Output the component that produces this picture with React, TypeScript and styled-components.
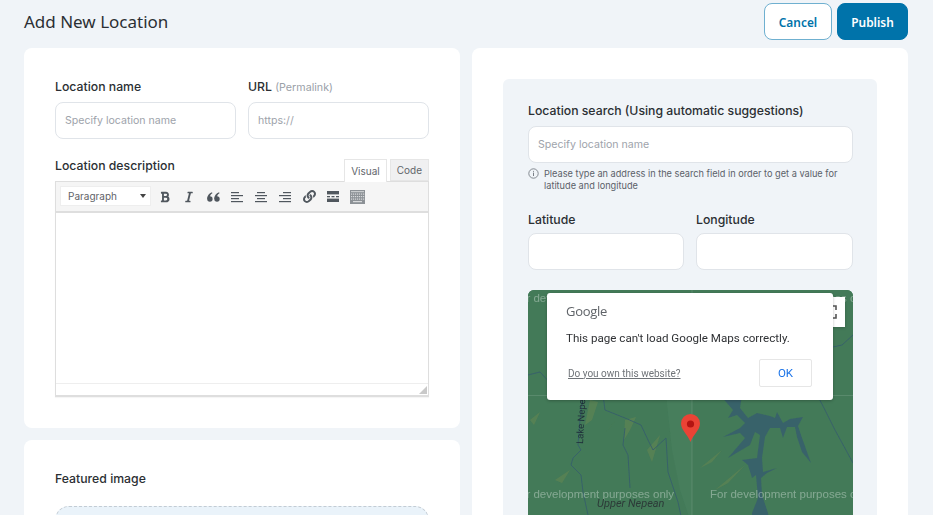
import React, { ReactElement } from 'react';
import styled, { createGlobalStyle } from 'styled-components';
import { FaBold, FaItalic, FaLink } from 'react-icons/fa';

const GlobalStyle = createGlobalStyle`
  html, body {
    margin: 0;
    padding: 0;
    background: #f0f4f8;
    font-family: Inter, "Liberation Sans", sans-serif;
    color: #24292f;
  }
  * {
    box-sizing: border-box;
  }
`;

const Page = styled.div`
  width: 933px;
  height: 515px;
  overflow: hidden;
  padding: 3px 25px 0 24px;
`;

const Header = styled.header`
  display: flex;
  justify-content: space-between;
  align-items: center;
  height: 37px;
  margin-bottom: 8px;
`;

const Title = styled.h1`
  margin: 0;
  font-family: "Noto Sans", sans-serif;
  font-size: 17px;
  font-weight: 400;
  color: #2b2f33;
`;

const Actions = styled.div`
  display: flex;
  gap: 5px;
`;

const Button = styled.button<{ $primary?: boolean }>`
  height: 37px;
  width: ${(p) => (p.$primary ? '71px' : '68px')};
  border-radius: 8px;
  border: 1px solid ${(p) => (p.$primary ? '#0073aa' : '#6fb0d0')};
  background: ${(p) => (p.$primary ? '#0073aa' : '#fff')};
  color: ${(p) => (p.$primary ? '#fff' : '#0073aa')};
  font-family: "Noto Sans", sans-serif;
  font-size: 11.9px;
  font-weight: 600;
  padding: 0;
`;

const Columns = styled.div`
  display: grid;
  grid-template-columns: 436px 436px;
  gap: 12px;
  align-items: start;
`;

const Column = styled.div`
  display: flex;
  flex-direction: column;
  gap: 12px;
`;

const Card = styled.section<{ $height?: number }>`
  background: #fff;
  border-radius: 8px;
  padding: 31px;
  height: ${(p) => (p.$height ? `${p.$height}px` : 'auto')};
`;

const Row = styled.div`
  display: grid;
  grid-template-columns: 1fr 1fr;
  gap: 12px;
`;

const Field = styled.div`
  display: flex;
  flex-direction: column;
  min-width: 0;
`;

const Label = styled.label`
  display: block;
  height: 16px;
  font-size: 12.25px;
  line-height: 16px;
  font-weight: 500;
  color: #2b2f33;
  margin-bottom: 7px;
`;

const Muted = styled.span`
  font-size: 10.7px;
  line-height: 1;
  font-weight: 400;
  color: #9aa0a8;
`;

const Input = styled.input`
  display: block;
  width: 100%;
  height: 37px;
  border: 1px solid #e0e4e9;
  border-radius: 8px;
  background: #fff;
  padding: 0 9px;
  font-family: inherit;
  font-size: 10.6px;
  outline: none;
  &::placeholder {
    color: #9ea3ab;
    opacity: 1;
  }
`;

const EditorHead = styled.div`
  display: flex;
  justify-content: space-between;
  align-items: flex-start;
  height: 22px;
  margin-top: 20px;
`;

const EditorLabel = styled(Label)`
  margin: -1px 0 0;
`;

const Tabs = styled.div`
  display: flex;
  gap: 3px;
`;

const Tab = styled.div<{ $active?: boolean }>`
  height: ${(p) => (p.$active ? '23px' : '22px')};
  padding: 0 6px;
  display: flex;
  align-items: center;
  font-size: 10px;
  color: #62666b;
  background: ${(p) => (p.$active ? '#fff' : '#f0f0f1')};
  border: 1px solid #e6e6e6;
  border-bottom: ${(p) => (p.$active ? '0' : '1px solid #e6e6e6')};
  position: relative;
  z-index: 1;
`;

const Editor = styled.div`
  height: 216px;
  border: 1px solid #dedede;
  border-bottom-width: 2px;
  display: flex;
  flex-direction: column;
  box-shadow: 0 1px 1px rgba(0, 0, 0, 0.04);
`;

const Toolbar = styled.div`
  height: 31px;
  flex: none;
  display: flex;
  align-items: center;
  padding-left: 4px;
  background: #f5f5f5;
  border-bottom: 2px solid #dedede;
`;

const FormatSelect = styled.div`
  width: 91px;
  height: 20px;
  margin-right: 2px;
  margin-bottom: 1px;
  background: #fff;
  border: 1px solid #eeeeee;
  display: flex;
  align-items: center;
  justify-content: space-between;
  padding: 0 4px 0 7px;
  font-size: 10px;
  color: #5f6368;
  &::after {
    content: '';
    border-left: 3px solid transparent;
    border-right: 3px solid transparent;
    border-top: 4px solid #444;
  }
`;

const ToolButton = styled.div`
  width: 24px;
  height: 24px;
  display: flex;
  align-items: center;
  justify-content: center;
  color: #50575e;
`;

const EditArea = styled.div`
  flex: 1;
  background: #fff;
`;

const StatusBar = styled.div`
  height: 12px;
  flex: none;
  background: #fff;
  border-top: 1px solid #eeeeee;
  display: flex;
  justify-content: flex-end;
  align-items: flex-end;
  padding: 0 1px 1px 0;
`;

const FeaturedLabel = styled(Label)`
  margin-bottom: 19px;
`;

const Dropzone = styled.div`
  height: 120px;
  border: 1px dashed #c3ccd4;
  border-radius: 14px;
  background: #eaf3fa;
`;

const SearchPanel = styled.div`
  background: #f0f4f8;
  border-radius: 6px;
  padding: 24px 24px 24px 25px;
`;

const Hint = styled.div`
  display: flex;
  gap: 5px;
  margin: 5px 0 20px;
  font-size: 9.2px;
  line-height: 12px;
  color: #5b6169;
`;

const HintIcon = styled.svg`
  flex: none;
  width: 11px;
  height: 11px;
`;

const LatLngRow = styled(Row)`
  grid-template-columns: 156px 157px;
  margin-bottom: 20px;
  ${Label} {
    margin-bottom: 5px;
  }
`;

const MapBox = styled.div`
  position: relative;
  height: 300px;
  border-radius: 6px;
  overflow: hidden;
  background: #437a58;
`;

const MapDrawing = styled.svg`
  display: block;
  width: 325px;
  height: 300px;
`;

const FullscreenControl = styled.div`
  position: absolute;
  top: 7px;
  right: 8px;
  width: 30px;
  height: 30px;
  background: #fff;
  display: flex;
  align-items: center;
  justify-content: center;
  box-shadow: 0 1px 3px rgba(0, 0, 0, 0.2);
`;

const Dialog = styled.div`
  position: absolute;
  top: 3px;
  left: 19px;
  width: 286px;
  height: 107px;
  background: #fff;
  border-radius: 3px;
  box-shadow: 0 1px 3px rgba(0, 0, 0, 0.25);
  padding: 10px 21px 13px 19px;
  display: flex;
  flex-direction: column;
`;

const GoogleMark = styled.div`
  font-family: "Open Sans", sans-serif;
  font-size: 13px;
  line-height: 17px;
  letter-spacing: -0.3px;
  color: #5f6368;
`;

const DialogText = styled.div`
  margin-top: 10px;
  font-family: Roboto, sans-serif;
  font-size: 11.6px;
  line-height: 16px;
  color: #2f3134;
`;

const DialogFoot = styled.div`
  margin-top: auto;
  display: flex;
  justify-content: space-between;
  align-items: center;
`;

const OwnLink = styled.a`
  margin-left: 2px;
  font-family: Roboto, sans-serif;
  font-size: 10px;
  color: #6f7378;
  text-decoration: underline;
`;

const OkButton = styled.button`
  width: 53px;
  height: 28px;
  padding: 0;
  background: #fff;
  border: 1px solid #e6e6e6;
  border-radius: 2px;
  color: #1a73e8;
  font-family: Roboto, sans-serif;
  font-size: 11.5px;
`;

const QuoteIcon = (): ReactElement => (
  <svg width="13" height="10" viewBox="0 0 13 10">
    <circle cx="2.9" cy="7" r="2.7" fill="#50575e" />
    <circle cx="10" cy="7" r="2.7" fill="#50575e" />
    <path d="M0.2 7C0.2 3.5 2 1 5 0.2L5.4 1.3C3.6 2.2 3 3.6 3 5.5Z" fill="#50575e" />
    <path d="M7.3 7C7.3 3.5 9.1 1 12.1 0.2L12.5 1.3C10.7 2.2 10.1 3.6 10.1 5.5Z" fill="#50575e" />
  </svg>
);

const AlignIcon = ({ kind }: { kind: 'left' | 'center' | 'right' }): ReactElement => {
  const lines = [
    { w: 8, y: 2 },
    { w: 12, y: 5 },
    { w: 8, y: 8 },
    { w: 12, y: 11 },
  ];
  const xFor = (w: number) => (kind === 'left' ? 0 : kind === 'center' ? (12 - w) / 2 : 12 - w);
  return (
    <svg width="12" height="13" viewBox="0 0 12 13">
      {lines.map((l) => (
        <rect key={l.y} x={xFor(l.w)} y={l.y} width={l.w} height="1.2" fill="#50575e" />
      ))}
    </svg>
  );
};

const PageBreakIcon = (): ReactElement => (
  <svg width="12" height="11" viewBox="0 0 12 11">
    <rect x="0" y="0" width="12" height="3.4" fill="#50575e" />
    <rect x="0" y="5" width="3" height="1.3" fill="#50575e" />
    <rect x="4.5" y="5" width="3" height="1.3" fill="#50575e" />
    <rect x="9" y="5" width="3" height="1.3" fill="#50575e" />
    <rect x="0" y="7.6" width="12" height="3.4" fill="#50575e" />
  </svg>
);

const KeyboardIcon = (): ReactElement => (
  <svg width="15" height="14" viewBox="0 0 15 14">
    <rect x="0" y="0" width="15" height="14" fill="#8c9196" />
    <rect x="1" y="1" width="13" height="1.2" fill="#c9ccce" />
    {[3.5, 6, 8.5].map((y) =>
      [1, 3, 5, 7, 9, 11, 13].map((x) => (
        <rect key={`${x}-${y}`} x={x} y={y} width="1.2" height="1.2" fill="#d7d9db" />
      )),
    )}
    <rect x="3" y="11" width="9" height="1.2" fill="#d7d9db" />
  </svg>
);

const ResizeGrip = (): ReactElement => (
  <svg width="8" height="8" viewBox="0 0 8 8">
    <path d="M8 0V8H0Z" fill="#c9c9c9" />
  </svg>
);

// map coordinates below are page pixels, the viewBox starts at the map's corner
const lakePath =
  'M720 395L742 395L740 408L748 418L757 413L770 416L775 418L777 412L783 423L790 419L803 417L798 426L802 438L811 463L802 452L797 437L795 427L787 427L783 438L780 428L770 428L765 437L762 458L763 472L777 468L767 473L761 478L762 495L768 513L772 540L752 540L752 513L758 498L756 475L752 478L748 465L742 460L757 458L760 435L755 432L750 445L728 458L745 438L740 433L723 437L740 428L745 423L737 415L728 418L733 410Z';

const rivers = [
  'M583 395L580 420L578 445L581 450L573 458L571 465L581 475L583 492L588 515',
  'M603 395L605 410L625 418L641 425L648 440L653 450L666 438L668 472L678 502L684 530',
  'M625 428L623 445L628 455L630 488',
  'M812 385L825 410L835 430L853 463',
  'M528 375L540 372L552 385',
  'M853 335L842 345L833 347',
];

const streaks = [
  'M590 400L585 425L592 420L598 402Z',
  'M612 425L606 432L616 420Z',
  'M625 420L636 417L630 430L624 440Z',
  'M647 450L660 435L652 462Z',
  'M700 468L722 450L712 462Z',
  'M715 490L745 465L728 483Z',
  'M530 420L540 412L534 425Z',
  'M555 480L570 470L562 483Z',
];

const MapCanvas = (): ReactElement => (
  <MapDrawing viewBox="528 290 325 300">
    <defs>
      <filter id="soft">
        <feGaussianBlur stdDeviation="0.5" />
      </filter>
    </defs>
    <rect x="528" y="290" width="325" height="300" fill="#437a58" />
    <g filter="url(#soft)">
      <path d="M666 395L692 395L692 590L690 520L680 490L672 450Z" fill="#477e5c" />
      {streaks.map((d) => (
        <path key={d} d={d} fill="#648552" opacity="0.6" />
      ))}
      {rivers.map((d) => (
        <path key={d} d={d} fill="none" stroke="#38626a" strokeWidth="1" />
      ))}
      <path d={lakePath} fill="#39626a" />
    </g>
    <path d="M528 395.5H853M692 290V590" stroke="#fff" strokeOpacity="0.12" strokeWidth="1" />
    <text x="513" y="498" fontFamily="Liberation Sans" fontSize="11.5" fill="#fff" fillOpacity="0.35">
      For development purposes only
    </text>
    <text x="710" y="498" fontFamily="Liberation Sans" fontSize="11.5" fill="#fff" fillOpacity="0.35">
      For development purposes only
    </text>
    <text x="513" y="302" fontFamily="Liberation Sans" fontSize="11.5" fill="#fff" fillOpacity="0.35">
      For development purposes only
    </text>
    <text x="710" y="302" fontFamily="Liberation Sans" fontSize="11.5" fill="#fff" fillOpacity="0.35">
      For development purposes only
    </text>
    <text x="597" y="507" fontFamily="Roboto" fontStyle="italic" fontSize="11" fill="#2c3a38">
      Upper Nepean
    </text>
    <text
      x="0"
      y="0"
      fontFamily="Roboto"
      fontSize="9.5"
      fill="#1f2f3a"
      transform="translate(583 444) rotate(-87)"
    >
      Lake Nepean
    </text>
    <path
      d="M690.5 442C688 435 681 430 681 423.5A9.5 9.5 0 0 1 700 423.5C700 430 693 435 690.5 442Z"
      fill="#ea4335"
    />
    <circle cx="690.5" cy="424" r="3.6" fill="#b31412" />
  </MapDrawing>
);

const App = (): ReactElement => (
  <Page>
    <GlobalStyle />
    <Header>
      <Title>Add New Location</Title>
      <Actions>
        <Button>Cancel</Button>
        <Button $primary>Publish</Button>
      </Actions>
    </Header>
    <Columns>
      <Column>
        <Card $height={380}>
          <Row>
            <Field>
              <Label>Location name</Label>
              <Input placeholder="Specify location name" />
            </Field>
            <Field>
              <Label>
                URL <Muted>(Permalink)</Muted>
              </Label>
              <Input placeholder="https://" />
            </Field>
          </Row>
          <EditorHead>
            <EditorLabel>Location description</EditorLabel>
            <Tabs>
              <Tab $active>Visual</Tab>
              <Tab>Code</Tab>
            </Tabs>
          </EditorHead>
          <Editor>
            <Toolbar>
              <FormatSelect>Paragraph</FormatSelect>
              <ToolButton>
                <FaBold size={12} />
              </ToolButton>
              <ToolButton>
                <FaItalic size={12} />
              </ToolButton>
              <ToolButton>
                <QuoteIcon />
              </ToolButton>
              <ToolButton>
                <AlignIcon kind="left" />
              </ToolButton>
              <ToolButton>
                <AlignIcon kind="center" />
              </ToolButton>
              <ToolButton>
                <AlignIcon kind="right" />
              </ToolButton>
              <ToolButton>
                <FaLink size={13} />
              </ToolButton>
              <ToolButton>
                <PageBreakIcon />
              </ToolButton>
              <ToolButton>
                <KeyboardIcon />
              </ToolButton>
            </Toolbar>
            <EditArea />
            <StatusBar>
              <ResizeGrip />
            </StatusBar>
          </Editor>
        </Card>
        <Card>
          <FeaturedLabel>Featured image</FeaturedLabel>
          <Dropzone />
        </Card>
      </Column>
      <Column>
        <Card>
          <SearchPanel>
            <Field>
              <Label>Location search (Using automatic suggestions)</Label>
              <Input placeholder="Specify location name" />
            </Field>
            <Hint>
              <HintIcon viewBox="0 0 11 11">
                <circle cx="5.5" cy="5.5" r="4.7" fill="none" stroke="#6b7178" strokeWidth="0.8" />
                <rect x="5.05" y="4.6" width="0.9" height="3.4" fill="#6b7178" />
                <rect x="5.05" y="2.9" width="0.9" height="0.9" fill="#6b7178" />
              </HintIcon>
              <span>
                Please type an address in the search field in order to get a value for latitude and longitude
              </span>
            </Hint>
            <LatLngRow>
              <Field>
                <Label>Latitude</Label>
                <Input />
              </Field>
              <Field>
                <Label>Longitude</Label>
                <Input />
              </Field>
            </LatLngRow>
            <MapBox>
              <MapCanvas />
              <FullscreenControl>
                <svg width="14" height="14" viewBox="0 0 14 14">
                  <path d="M1 5V1H5M9 1H13V5M13 9V13H9M5 13H1V9" fill="none" stroke="#555" strokeWidth="1.6" />
                </svg>
              </FullscreenControl>
              <Dialog>
                <GoogleMark>Google</GoogleMark>
                <DialogText>This page can't load Google Maps correctly.</DialogText>
                <DialogFoot>
                  <OwnLink>Do you own this website?</OwnLink>
                  <OkButton>OK</OkButton>
                </DialogFoot>
              </Dialog>
            </MapBox>
          </SearchPanel>
        </Card>
      </Column>
    </Columns>
  </Page>
);

export default App;
